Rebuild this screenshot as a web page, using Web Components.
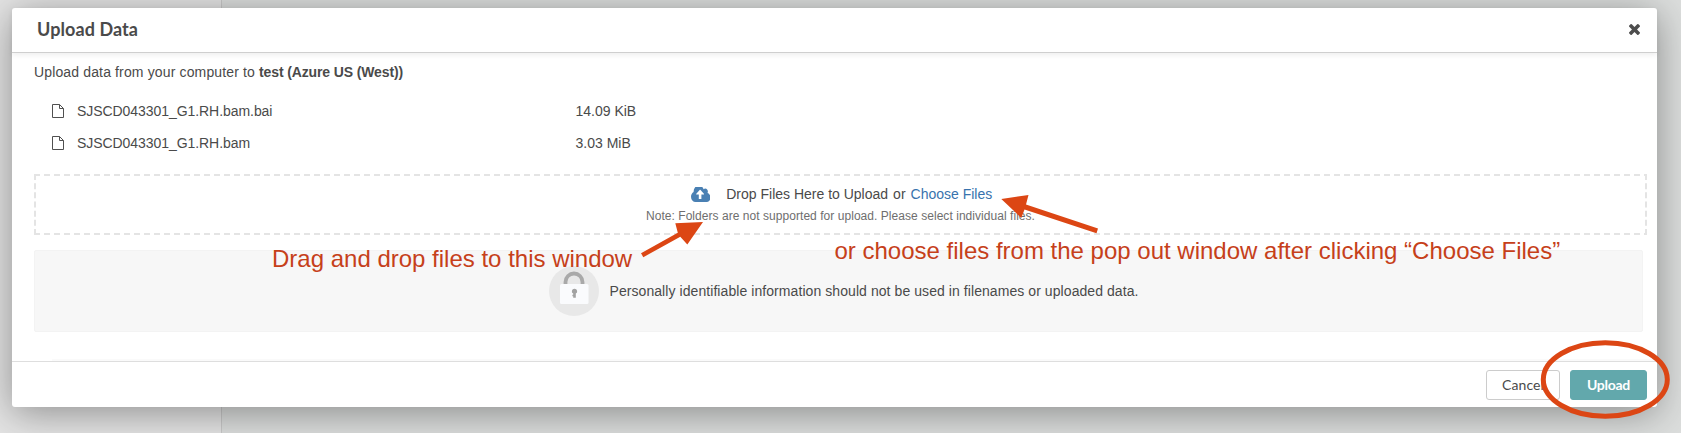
<!DOCTYPE html>
<html lang="en">
<head>
<meta charset="utf-8">
<title>Upload Data</title>
<style>
html,body{margin:0;height:100%;overflow:hidden}
body{font:14px/20px "Liberation Sans",Arial,sans-serif;color:#4a4a4a}
</style>
</head>
<body>
<upload-page></upload-page>
<script>
function define(name, html) {
  const template = document.createElement('template');
  template.innerHTML = html;
  customElements.define(name, class extends HTMLElement {
    constructor() {
      super();
      this.attachShadow({mode: 'open'}).append(template.content.cloneNode(true));
    }
  });
}

define('file-row', `
<style>
:host{display:grid;grid-template-columns:25px 498.5px 1fr;align-items:center;height:32px;padding-left:18px}
svg{display:block}
[name=size]{letter-spacing:0}
</style>
<svg width="12" height="14" viewBox="0 0 12 14" fill="none" stroke="#505050" stroke-width="1"><path d="M.5.5h7l4 4v9H.5z"/><path d="M7.5.5v4h4"/></svg>
<span><slot></slot></span><span><slot name="size"></slot></span>`);

define('drop-zone', `
<style>
:host{display:flex;flex-direction:column;align-items:center;box-sizing:border-box;height:61px;padding-top:10px;position:relative}
.edge{position:absolute;inset:0;width:100%;height:100%}
.line{display:flex;align-items:center;height:20px;padding-left:2px}
.cloud{margin-right:16px}
.or{margin:0 5px}
a{color:#3873ad}
.note{font-size:12px;line-height:17px;margin-top:4px;letter-spacing:.046px;color:#6e6e6e}
</style>
<svg class="edge" fill="none" stroke="#e4e4e4" stroke-width="2"><path d="M0 1H1613M0 60H1613" stroke-dasharray="6 4"/><path d="M1 0V61M1612 0V61" stroke-dasharray="6 3.17"/></svg>
<div class="line">
<svg class="cloud" width="19.500" height="15" viewBox="0 256 1920 1280" preserveAspectRatio="none"><path fill="#4a80b3" d="M1280 864q0-14-9-23l-352-352q-9-9-23-9t-23 9l-351 351q-10 12-10 24 0 14 9 23t23 9h224v352q0 13 9.500 22.500t22.500 9.500h192q13 0 22.500-9.500t9.500-22.500v-352h224q13 0 22.500-9.500t9.500-22.500zm640 288q0 159-112.500 271.500t-271.500 112.500h-1088q-185 0-316.500-131.500t-131.500-316.500q0-130 70-240t188-165q-2-30-2-43 0-212 150-362t362-150q156 0 285.500 87t188.500 231q71-62 166-62 106 0 181 75t75 181q0 76-41 138 130 31 213.500 135.500t83.500 238.500z"/></svg>
<span>Drop Files Here to Upload</span><span class="or">or</span><a>Choose Files</a></div>
<div class="note">Note: Folders are not supported for upload. Please select individual files.</div>`);

define('privacy-note', `
<style>
:host{display:flex;align-items:center;justify-content:center;gap:10px;box-sizing:border-box;width:1609px;height:82px;padding-left:11px;background:#f7f7f7;border:1px solid #f3f3f3;border-radius:2px;letter-spacing:.071px}
</style>
<svg width="50" height="50" viewBox="0 0 50 50"><circle cx="25" cy="25" r="25" fill="#e8e8e8"/><path d="M16.500 20v-4a8.500 8.500 0 0 1 17 0v4" fill="none" stroke="#a9a9a9" stroke-width="3.800"/><rect x="11" y="18" width="28.500" height="20" rx="1.500" fill="#fafbfd"/><path d="M25.500 22.700a2.600 2.600 0 0 1 1.300 4.900v4.200h-2.600v-1.600h-.8v-1.400h.8v-1.200a2.600 2.600 0 0 1 1.300-4.900z" fill="#a2a2a2"/></svg>
<span><slot></slot></span>`);

define('dialog-button', `
<style>
:host{display:flex;align-items:center;justify-content:center;box-sizing:border-box;width:74px;height:30px;border:1px solid #ccc;border-radius:3px;background:#fff;font-family:Lato,sans-serif;letter-spacing:.1px}
:host([primary]){width:77px;background:#62a8ac;border-color:#62a8ac;color:#fff;font-weight:bold;letter-spacing:-.28px}
</style><slot></slot>`);

define('modal-dialog', `
<style>
:host{display:flex;flex-direction:column;box-sizing:border-box;height:399px;background:#fff;border-radius:3px;box-shadow:0 6px 38px rgba(0,0,0,.38)}
header{display:flex;align-items:center;justify-content:space-between;box-sizing:border-box;height:45px;padding:0 17px 3px 25px;border-bottom:1px solid #cfcfcf;box-shadow:0 2px 5px rgba(0,0,0,.07);font:bold 18px/24px Lato,sans-serif;letter-spacing:.08px}
header svg{display:block;margin-top:2px}
main{flex:1;padding:0 10px 0 22px}
.rule{height:2px;background:#fafafa;margin-left:40px}
footer{display:flex;align-items:center;justify-content:flex-end;gap:10px;box-sizing:border-box;height:46px;padding:0 10px 0 0;border-top:1px solid #dedede}
</style>
<header><slot name="title"></slot><svg width="11" height="11" viewBox="302 366 1188 1188"><path fill="#4d4d4d" d="M1490 1322q0 40-28 68l-136 136q-28 28-68 28t-68-28l-294-294-294 294q-28 28-68 28t-68-28l-136-136q-28-28-28-68t28-68l294-294-294-294q-28-28-28-68t28-68l136-136q28-28 68-28t68 28l294 294 294-294q28-28 68-28t68 28l136 136q28 28 28 68t-28 68l-294 294 294 294q28 28 28 68z"/></svg></header>
<main><slot></slot></main>
<div class="rule"></div>
<footer><slot name="actions"></slot></footer>`);

define('guide-marks', `
<style>
:host{position:absolute;inset:0;pointer-events:none}
svg{display:block}
text{font:24px "Liberation Sans",Arial,sans-serif;fill:#c6401a}
</style>
<svg width="1681" height="433">
<text x="272" y="267">Drag and drop files to this window</text>
<text x="834.500" y="259">or choose files from the pop out window after clicking “Choose Files”</text>
<g fill="#dc4614"><path d="M641 253.200 677.800 232.800 675.300 223.300 703 222 687.300 244.500 680.300 236.800 643.300 257.200z"/>
<path d="M1001.300 199 1028.500 195 1026 204.600 1098 228.400 1096.500 233.200 1024.500 209.400 1021.300 218z"/></g>
<ellipse cx="1605.300" cy="379.500" rx="62" ry="36.800" fill="none" stroke="#dc4614" stroke-width="5"/>
</svg>`);

define('upload-page', `
<style>
:host{display:block;position:relative;box-sizing:border-box;width:1681px;height:433px;padding:8px 24px 0 12px;overflow:hidden;background:linear-gradient(90deg,#e4e4e4 221px,#c9c9c9 221px,#c9c9c9 222px,#dcdedd 222px)}
modal-dialog{position:relative}
.intro{padding-top:9px;height:33px;letter-spacing:.141px}
b{letter-spacing:-.125px}
file-row{letter-spacing:-.06px}
file-row [slot]{letter-spacing:0}
drop-zone{margin:15px 0}
</style>
<modal-dialog>
<span slot="title">Upload Data</span>
<div class="intro">Upload data from your computer to <b>test (Azure US (West))</b></div>
<file-row>SJSCD043301_G1.RH.bam.bai<span slot="size">14.09 KiB</span></file-row>
<file-row>SJSCD043301_G1.RH.bam<span slot="size">3.03 MiB</span></file-row>
<drop-zone></drop-zone>
<privacy-note>Personally identifiable information should not be used in filenames or uploaded data.</privacy-note>
<dialog-button slot="actions">Cancel</dialog-button>
<dialog-button slot="actions" primary>Upload</dialog-button>
</modal-dialog>
<guide-marks></guide-marks>`);
</script>
</body>
</html>
